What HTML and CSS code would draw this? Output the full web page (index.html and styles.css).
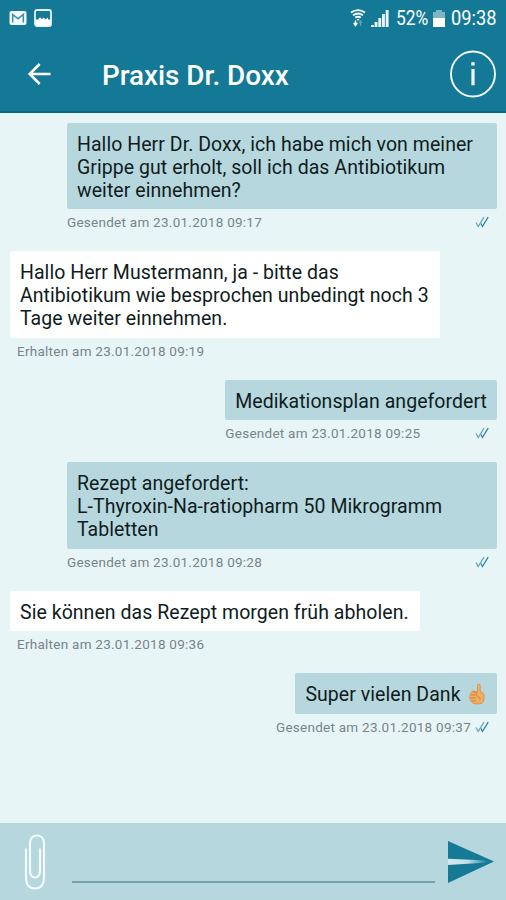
FILE: index.html
```html
<!DOCTYPE html>
<html lang="de">
<head>
  <meta charset="UTF-8">
  <meta name="viewport" content="width=device-width, initial-scale=1.0">
  <title>Praxis Dr. Doxx</title>
  <link rel="stylesheet" href="styles.css">
</head>
<body>
  <!-- Check mark icon, used under every sent message -->
  <svg width="0" height="0" class="defs">
    <symbol id="checks" viewBox="0 0 14 12">
      <path d="M1 6.5L3.2 10.5L9 1.2" fill="none" stroke="#6fa5ba" stroke-width="1.3"/>
      <path d="M6 7.5L7.4 10.5L13.2 1.2" fill="none" stroke="#2f84a5" stroke-width="1.3"/>
    </symbol>
    <linearGradient id="fold">
      <stop offset="0" stop-color="#d2e9ee"/>
      <stop offset="0.5" stop-color="#c2e0e6"/>
      <stop offset="1" stop-color="#167a96"/>
    </linearGradient>
  </svg>

  <div class="app">
    <header>
      <div class="status-bar">
        <svg class="status-mail" width="18" height="16" viewBox="0 0 18 16">
          <rect x="0.5" y="1" width="17" height="14" rx="2" fill="#f3fafc"/>
          <path d="M3.7 12.5V4.5L9 8.7L14.3 4.5V12.5" fill="none" stroke="#3c8fa8" stroke-width="1.5"/>
        </svg>
        <svg class="status-image" width="18" height="18" viewBox="0 0 18 18">
          <rect x="1" y="1" width="16" height="16" rx="2" fill="none" stroke="#e6f3f6" stroke-width="1.8"/>
          <path d="M1.5 10.5H4L6 8.2L8 10.2L9.5 8.5L11.5 10.5L14 8.5V10.5H16.5V16.5H1.5Z" fill="#fff"/>
        </svg>
        <svg class="status-wifi" width="16" height="18" viewBox="0 0 16 18">
          <path d="M1 3.6Q8 -1.4 15 3.6M3 6.2Q8 2.8 13 6.2M5.3 8.6Q8 6.8 10.7 8.6" fill="none" stroke="#fff" stroke-width="1.9"/>
          <path d="M6.5 10H9.5L8 12Z" fill="#fff"/>
          <path d="M5.5 11.5V16M3.7 14L5.5 16.4L7.3 14" fill="none" stroke="#fff" stroke-width="1.5"/>
          <path d="M10.5 17V12M9 13.8L10.5 12L12 13.8" fill="none" stroke="#5fa3b6" stroke-width="1.2"/>
        </svg>
        <svg class="status-signal" width="18" height="17" viewBox="0 0 18 17">
          <path d="M0 15H2.9V17H0ZM3.6 12H6.5V17H3.6ZM7.3 8H10.2V17H7.3ZM11 4H13.9V17H11ZM14.7 0H17.6V17H14.7Z" fill="#e9f5f8"/>
        </svg>
        <span class="percent">52%</span>
        <svg class="status-battery" width="12" height="17" viewBox="0 0 12 17">
          <path d="M0 2H3V0H9V2H12V8H0Z" fill="#7fb5c5"/>
          <path d="M0 8H12V17H0Z" fill="#fff"/>
        </svg>
        <span class="time">09:38</span>
      </div>

      <div class="title-bar">
        <svg class="back" width="24" height="24" viewBox="0 0 24 24">
          <path d="M23.5 12H2.5M12.7 2L2.7 12L12.7 22" fill="none" stroke="#fff" stroke-width="2.6"/>
        </svg>
        <h1>Praxis Dr. Doxx</h1>
        <svg class="info" width="46" height="48" viewBox="0 0 46 48">
          <ellipse cx="23" cy="24" rx="22" ry="22.5" fill="none" stroke="#f3fbff" stroke-width="1.9"/>
          <path d="M21.3 12.2H24.7V15.6H21.3ZM21.4 19H24.6V35.3H21.4Z" fill="#f3fbff"/>
        </svg>
      </div>
    </header>

    <main>
      <div class="message sent wide">
        <div class="bubble">Hallo Herr Dr. Doxx, ich habe mich von meiner<br>Grippe gut erholt, soll ich das Antibiotikum<br>weiter einnehmen?</div>
        <div class="meta"><span>Gesendet am 23.01.2018 09:17</span><svg class="checks"><use href="#checks"/></svg></div>
      </div>

      <div class="message received">
        <div class="bubble">Hallo Herr Mustermann, ja - bitte das<br>Antibiotikum wie besprochen unbedingt noch 3<br>Tage weiter einnehmen.</div>
        <div class="meta"><span>Erhalten am 23.01.2018 09:19</span></div>
      </div>

      <div class="message sent">
        <div class="bubble">Medikationsplan angefordert</div>
        <div class="meta"><span>Gesendet am 23.01.2018 09:25</span><svg class="checks"><use href="#checks"/></svg></div>
      </div>

      <div class="message sent wide">
        <div class="bubble">Rezept angefordert:<br>L-Thyroxin-Na-ratiopharm 50 Mikrogramm<br>Tabletten</div>
        <div class="meta"><span>Gesendet am 23.01.2018 09:28</span><svg class="checks"><use href="#checks"/></svg></div>
      </div>

      <div class="message received">
        <div class="bubble">Sie können das Rezept morgen früh abholen.</div>
        <div class="meta"><span>Erhalten am 23.01.2018 09:36</span></div>
      </div>

      <div class="message sent short">
        <div class="bubble">Super vielen Dank
          <svg class="thumb" width="16" height="22" viewBox="0 0 17 22">
            <path d="M9 2Q9 0.6 10.5 0.6Q12 0.6 12 2V8.5Q15.8 9.5 16 12V17Q15.5 21.3 11 21.5H6.5Q3.5 21 2.3 18.5Q0.4 17.5 1 15.5Q0.2 13.5 1.3 12Q0.8 9.8 2.8 8.8Q3.4 7.3 5.2 7.8L9 9Z" fill="#f0ae62" stroke="#d58a42" stroke-width="0.8"/>
            <path d="M2 12H7M1.8 15.2H7M3 18.3H7.5M4 9.2L8 9.4M8 9.5Q6.5 12 9 13.5Q12 14 12 17" fill="none" stroke="#c77a3c" stroke-width="0.9"/>
          </svg>
        </div>
        <div class="meta"><span>Gesendet am 23.01.2018 09:37</span><svg class="checks"><use href="#checks"/></svg></div>
      </div>
    </main>

    <footer>
      <svg class="clip" width="22" height="56" viewBox="0 0 22 56">
        <path d="M2 14.5V43Q2 54.5 11 54.5Q20 54.5 20 43V10Q20 1.5 13 1.5Q6 1.5 6 10V36Q6 43.5 11 43.5Q16 43.5 16 36V14.5" fill="none" stroke="#f3fcff" stroke-width="2.1"/>
      </svg>
      <div class="input"></div>
      <svg class="send" width="46" height="42" viewBox="0 0 46 42">
        <path d="M0 0L46 20.5L0 42Z" fill="#167a96"/>
        <path d="M0 17.8L40 19.6V21.4L0 24Z" fill="url(#fold)"/>
      </svg>
    </footer>
  </div>
</body>
</html>
```
FILE: styles.css
```css
body {
  margin: 0;
  font-family: Roboto, sans-serif;
  background-color: #e7f5f7;
  color: #101c20;
}

.defs {
  position: absolute;
}

.app {
  display: flex;
  flex-direction: column;
  height: 900px;
  overflow: hidden;
}

/* Header */
header {
  box-sizing: border-box;
  height: 113px;
  background-color: #147996;
  border-bottom: 2px solid #086783;
  color: #fff;
}

.status-bar {
  display: flex;
  align-items: center;
  height: 36px;
  padding: 0 9px;
  font-size: 21px;
}

.status-image {
  margin-left: 7px;
}

.status-wifi {
  margin-left: auto;
}

.status-signal {
  margin-left: 5px;
}

/* Narrow digits */
.percent,
.time {
  transform-origin: left center;
}

.percent {
  width: 34px;
  margin-left: 7px;
  transform: scaleX(0.83);
}

.status-battery {
  margin-left: 3px;
}

.time {
  width: 46px;
  margin-left: 6px;
  transform: scaleX(0.87);
}

.title-bar {
  display: flex;
  align-items: center;
  height: 75px;
  padding: 0 10px 0 27px;
}

h1 {
  margin: 4px 0 0 51px;
  font-size: 27.8px;
  font-weight: 500;
  line-height: 32px;
}

.info {
  margin-left: auto;
}

/* Conversation */
main {
  flex: 1;
  display: flex;
  flex-direction: column;
  gap: 15.2px;
  padding: 10px 9.5px 0 11px;
}

.message {
  display: flex;
  flex-direction: column;
}

.bubble {
  padding: 10px 9.5px 7.3px 10px;
  border-radius: 2px;
  font-size: 19.5px;
  letter-spacing: 0.05px;
  line-height: 23px;
  white-space: nowrap;
}

.meta {
  display: flex;
  align-items: center;
  box-sizing: border-box;
  height: 27px;
  padding-bottom: 1px;
  font-size: 13.5px;
  letter-spacing: 0.26px;
  color: #788489;
}

.checks {
  width: 14px;
  height: 12px;
  margin: 0 7.5px 0 auto;
}

.sent {
  align-self: flex-end;
}

.sent .bubble {
  background-color: #b6d7dd;
}

.wide {
  width: 429.5px;
}

.received {
  align-self: flex-start;
}

.received .bubble {
  margin-left: -1px;
  padding-right: 11px;
  background-color: #fff;
}

.received .meta {
  padding-left: 6px;
}

/* The time line is wider than the bubble here */
.short .bubble {
  align-self: flex-end;
  box-sizing: border-box;
  height: 40.3px;
  padding-right: 12px;
}

.short .checks {
  margin-left: 4px;
}

.thumb {
  margin-left: 3px;
  vertical-align: -4px;
}

/* Input bar */
footer {
  display: flex;
  height: 77px;
  background-color: #b6d7dd;
}

.clip {
  margin: 11px 0 0 24px;
}

.input {
  flex: 1;
  height: 58px;
  margin: 0 13px 0 26px;
  border-bottom: 2px solid #78a0a9;
}

.send {
  margin: 18px 12px 0 0;
}
```
